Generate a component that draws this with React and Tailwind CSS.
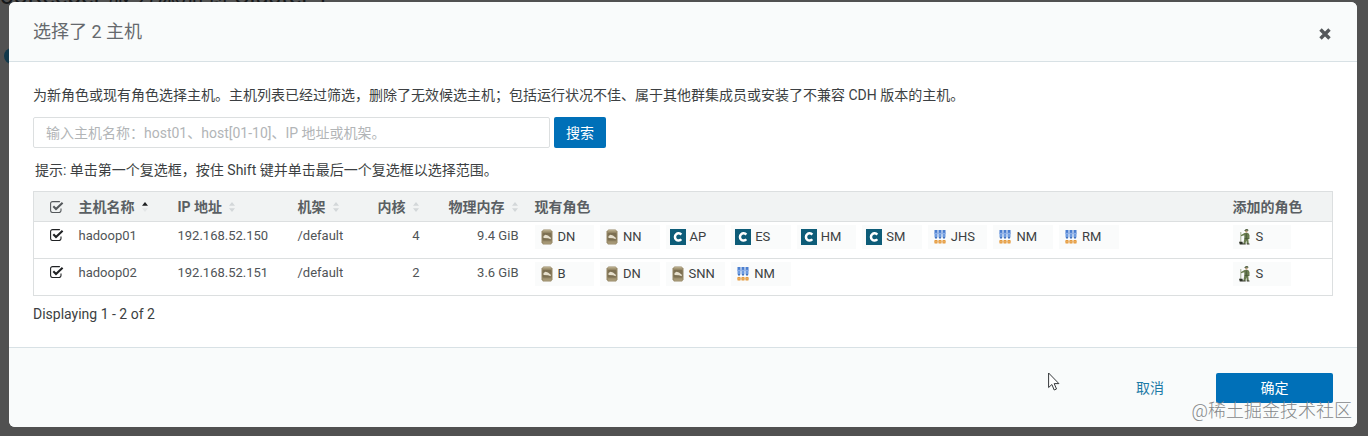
import { useState } from 'react'

const HOSTS = [
  {
    name: 'hadoop01',
    ip: '192.168.52.150',
    rack: '/default',
    cores: 4,
    memory: '9.4 GiB',
    roles: [
      ['hdfs', 'DN'],
      ['hdfs', 'NN'],
      ['mgmt', 'AP'],
      ['mgmt', 'ES'],
      ['mgmt', 'HM'],
      ['mgmt', 'SM'],
      ['yarn', 'JHS'],
      ['yarn', 'NM'],
      ['yarn', 'RM'],
    ],
    added: ['zookeeper', 'S'],
  },
  {
    name: 'hadoop02',
    ip: '192.168.52.151',
    rack: '/default',
    cores: 2,
    memory: '3.6 GiB',
    roles: [
      ['hdfs', 'B'],
      ['hdfs', 'DN'],
      ['hdfs', 'SNN'],
      ['yarn', 'NM'],
    ],
    added: ['zookeeper', 'S'],
  },
]

// ── Service icons ─────────────────────────────────────────────
function HdfsIcon() {
  return (
    <svg viewBox="0 0 12 16" className="w-3 h-4 mr-[5px] shrink-0" aria-hidden="true">
      <path d="M2.500 .5h7l2 2v11l-1.500 2H2l-1.500-2v-11z" fill="#958766" />
      <path d="M2.500 1h7l1 1.500h-9z" fill="#b5a988" />
      <rect x="1.500" y="4" width="9" height="7.500" rx="1" fill="#7d7052" />
      <path d="M2.500 9V7l2-1.300 2.500.8 2.800 2.300v1.400L7 9.200z" fill="#e6dfcc" />
      <path d="M1.500 12.500h9v1l-1 1.500h-7z" fill="#a59775" />
    </svg>
  )
}

function MgmtIcon() {
  return (
    <svg viewBox="0 0 16 16" className="w-4 h-4 mr-1 -ml-0.5 shrink-0" aria-hidden="true">
      <rect width="16" height="16" fill="#0d5c78" />
      <path d="M11.300 5.600A3.600 3.600 0 1 0 11.300 10.300" fill="none" stroke="#fff" strokeWidth="2.500" />
    </svg>
  )
}

function YarnIcon() {
  return (
    <svg viewBox="0 0 12 14" className="w-3 h-3.5 mr-[5px] shrink-0" aria-hidden="true">
      {[0.5, 4.5, 8.5].map(x => (
        <g key={x}>
          <rect x={x} y="0" width="3" height="3.500" fill="#4b7fd0" />
          <rect x={x} y="4" width="3" height="3" fill="#6d9be0" />
          <path d={`M${x} 7h3l-1.500 2.200z`} fill="#3f70bd" />
          <rect x={x} y="10" width="3" height="3.500" rx=".5" fill="#e59a3c" />
        </g>
      ))}
      <rect x="0" y="2.800" width="12" height="1" fill="#86abe6" />
      <rect x="0" y="11.300" width="12" height="1" fill="#eab36c" />
    </svg>
  )
}

function ZookeeperIcon() {
  return (
    <svg viewBox="0 0 12 16" className="w-3 h-4 mr-[5px] shrink-0" aria-hidden="true">
      <path d="M1.800 3v10" stroke="#8c9a76" strokeWidth=".8" />
      <path d="M0 12.800h3.500L4 15.500H.8z" fill="#2e3328" />
      <path d="M5.500 1.200 7 0l2 .3.500 1.500-4 .2z" fill="#4c5c3c" />
      <circle cx="7.400" cy="2.600" r="1.200" fill="#b69a78" />
      <path d="M5.500 4h3.700l1.300 2v4H9.300l.5 5H7.800l-.4-3.500L6.300 15h-2l1-5.500V6.300L2 7.200V6z" fill="#6a7d50" />
      <path d="M7.300 4.500v6M5.600 9.500h4" stroke="#475838" strokeWidth=".8" />
      <path d="M4 14.500h2.700v1H4zM7.800 14.500h2.700v1H7.800z" fill="#3a3c30" />
    </svg>
  )
}

const ICONS = { hdfs: HdfsIcon, mgmt: MgmtIcon, yarn: YarnIcon, zookeeper: ZookeeperIcon }

function RoleChip({ service, label }) {
  const Icon = ICONS[service]
  return (
    <span className="flex items-center h-6 pl-1.5 mr-1.5 bg-[#fafbfb] text-[#3c3f42]">
      <Icon />
      {label}
    </span>
  )
}

// ── Table parts ───────────────────────────────────────────────
function CheckBox({ label, checked, onChange, className }) {
  return (
    <label className={`relative block w-[14px] h-3 ${className}`}>
      <input
        type="checkbox"
        aria-label={label}
        checked={checked}
        onChange={onChange}
        className="absolute inset-0 appearance-none cursor-pointer"
      />
      <svg viewBox="0 0 14 12" className="block w-[14px] h-3 pointer-events-none" fill="none" stroke="currentColor">
        <path d="M11 7.500V9.500a2 2 0 0 1-2 2H2.600a2 2 0 0 1-2-2V2.600a2 2 0 0 1 2-2H9q.6 0 1 .2" strokeWidth="1.100" />
        {checked && <path d="M3.300 5.300 6 8 12.600 1.700" strokeWidth="2.100" />}
      </svg>
    </label>
  )
}

function SortIcon({ sorted }) {
  return (
    <svg viewBox="0 0 8 10" className="inline-block w-2 h-2.5 ml-1.5 -mt-0.5" aria-hidden="true">
      <path d="M4 0 7 3.800H1z" fill={sorted ? '#1d1f21' : '#d3d7d9'} />
      <path d="M4 10 7 6.200H1z" fill={sorted ? '#e3e6e7' : '#d3d7d9'} />
    </svg>
  )
}

export default function App() {
  const [selected, setSelected] = useState(['hadoop01', 'hadoop02'])
  const [query, setQuery] = useState('')

  const allSelected = selected.length === HOSTS.length

  function toggle(name) {
    setSelected(s => (s.includes(name) ? s.filter(n => n !== name) : [...s, name]))
  }

  return (
    <div className="relative min-h-screen overflow-hidden bg-[#515151] pt-0.5 pb-2.5 pl-[9px] pr-[11px] font-['Roboto','Noto_Sans_CJK_SC',sans-serif] text-sm leading-5 text-[#3c3f42]">
      {/* Wizard page under the backdrop */}
      <h1 className="absolute left-0 -top-4 text-2xl leading-6 text-[#16181a]">ooKeeper 服务添加到 Cluster 1</h1>
      <span className="absolute left-1 top-12 w-4 h-4 rounded-full bg-[#12394b]" />

      <div role="dialog" aria-labelledby="dialog-title" className="relative rounded-md overflow-hidden bg-white">
        {/* Header */}
        <div className="flex items-center justify-between h-[60px] px-6 border-b border-[#d8e1e5] bg-[#f9fbfb]">
          <h2 id="dialog-title" className="text-lg text-[#65696d]">选择了 2 主机</h2>
          <button type="button" aria-label="关闭" className="mt-1 p-0.5 text-[#55585b]">
            <svg viewBox="0 0 12 12" className="w-3 h-3" stroke="currentColor" strokeWidth="3.400">
              <path d="M1.500 1.500 10.500 10.500M10.500 1.500 1.500 10.500" />
            </svg>
          </button>
        </div>

        {/* Body */}
        <div className="px-6 py-[23px]">
          <p>为新角色或现有角色选择主机。主机列表已经过筛选，删除了无效候选主机；包括运行状况不佳、属于其他群集成员或安装了不兼容 CDH 版本的主机。</p>

          <form className="flex gap-1 mt-3" onSubmit={e => e.preventDefault()}>
            <input
              type="text"
              aria-label="主机名称"
              value={query}
              onChange={e => setQuery(e.target.value)}
              placeholder="输入主机名称：host01、host[01-10]、IP 地址或机架。"
              className="w-[517px] h-[31px] px-3 border border-[#dcdfe0] rounded-xs placeholder:text-[#b2b5b7] focus:outline-none"
            />
            <button type="submit" className="h-[31px] px-3 rounded-xs bg-[#0070b8] text-white">搜索</button>
          </form>

          <p className="mt-3 pl-0.5">提示: 单击第一个复选框，按住 Shift 键并单击最后一个复选框以选择范围。</p>

          <table className="w-full mt-[11px] table-fixed border border-[#dcdfe0] text-[13px]">
            <colgroup>
              <col className="w-[37px]" />
              <col className="w-[99px]" />
              <col className="w-[120px]" />
              <col className="w-[72px]" />
              <col className="w-[66px]" />
              <col className="w-[99px]" />
              <col />
              <col className="w-[108px]" />
            </colgroup>
            <thead>
              <tr className="h-[30px] bg-[#f1f3f3] text-left text-sm text-[#5a5f63]">
                <th className="pl-4">
                  <CheckBox
                    label="全选"
                    checked={allSelected}
                    onChange={() => setSelected(allSelected ? [] : HOSTS.map(h => h.name))}
                    className="text-[#55595c]"
                  />
                </th>
                <th className="px-2">主机名称<SortIcon sorted /></th>
                <th className="px-2">IP 地址<SortIcon /></th>
                <th className="px-2">机架<SortIcon /></th>
                <th className="px-2 text-right">内核<SortIcon /></th>
                <th className="px-2 text-right">物理内存<SortIcon /></th>
                <th className="px-2">现有角色</th>
                <th className="px-2">添加的角色</th>
              </tr>
            </thead>
            <tbody>
              {HOSTS.map(host => (
                <tr key={host.name} className="h-[37px] border-t border-[#dcdfe0] align-top text-[#505457]">
                  <td className="pl-4 pt-[7px]">
                    <CheckBox
                      label={host.name}
                      checked={selected.includes(host.name)}
                      onChange={() => toggle(host.name)}
                      className="text-[#202224]"
                    />
                  </td>
                  <td className="px-2 pt-1">{host.name}</td>
                  <td className="px-2 pt-1">{host.ip}</td>
                  <td className="px-2 pt-1">{host.rack}</td>
                  <td className="px-2 pt-1 text-right">{host.cores}</td>
                  <td className="px-2 pt-1 text-right">{host.memory}</td>
                  <td className="px-2 pt-[3px]">
                    <div className="grid grid-cols-9 max-w-[590px]">
                      {host.roles.map(([service, label]) => (
                        <RoleChip key={label} service={service} label={label} />
                      ))}
                    </div>
                  </td>
                  <td className="px-2 pt-[3px]">
                    <div className="w-16">
                      <RoleChip service={host.added[0]} label={host.added[1]} />
                    </div>
                  </td>
                </tr>
              ))}
            </tbody>
          </table>

          <p className="mt-2">Displaying 1 - 2 of 2</p>
        </div>

        {/* Footer */}
        <div className="flex items-center justify-end gap-10 h-20 px-6 border-t border-[#d8e1e5] bg-[#f9fbfb]">
          <button type="button" className="px-3 text-[#1c7aa6]">取消</button>
          <button type="button" className="w-[117px] h-[30px] rounded-xs bg-[#0070b8] text-white">确定</button>
        </div>
      </div>

      {/* Mouse pointer */}
      <svg viewBox="0 0 12 19" className="absolute left-[1048px] top-[372px] w-3 h-[19px]" fill="#fff" stroke="#34373a" strokeLinejoin="round" aria-hidden="true">
        <path d="M.6 1v14.500l3.300-3 2.300 5.500 2.300-1L6.200 11.600h4.700z" />
      </svg>

      <span className="absolute right-4 bottom-3.5 text-lg leading-6 font-light text-[#85888a]">@稀土掘金技术社区</span>
    </div>
  )
}
